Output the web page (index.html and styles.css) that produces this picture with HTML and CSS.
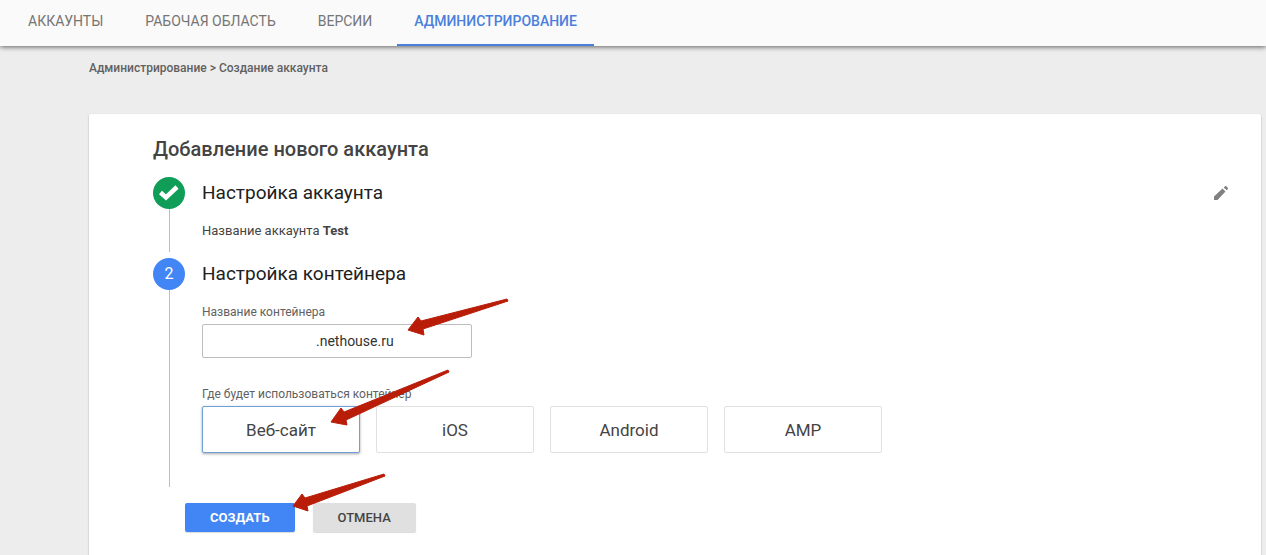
FILE: index.html
```html
<!DOCTYPE html>
<html lang="ru">
<head>
  <meta charset="UTF-8">
  <title>Создание аккаунта</title>
  <link rel="stylesheet" href="styles.css">
</head>
<body>
  <nav class="tabs">
    <a href="#accounts">АККАУНТЫ</a>
    <a href="#workspace">РАБОЧАЯ ОБЛАСТЬ</a>
    <a href="#versions">ВЕРСИИ</a>
    <a href="#admin" class="active">АДМИНИСТРИРОВАНИЕ</a>
  </nav>
  <main class="page">
    <div class="breadcrumbs">Администрирование &gt; Создание аккаунта</div>
    <form class="card">
      <h1>Добавление нового аккаунта</h1>

      <section class="step">
        <div class="marker">
          <span class="circle done">
            <svg width="32" height="32" viewBox="0 0 32 32"><path d="M7.5 15.500l5.500 5L24 10" fill="none" stroke="#fff" stroke-width="4.500"/></svg>
          </span>
        </div>
        <div class="content">
          <div class="step-head">
            <h2>Настройка аккаунта</h2>
            <button type="button" class="edit" aria-label="Изменить">
              <svg width="18" height="18" viewBox="0 0 18 18"><path fill="#808080" d="M2 12.500L10.500 4.500L13.500 7.500L5.500 16H2ZM11.700 3.400L13 2.200Q13.700 1.800 14.300 2.300L15.800 3.800Q16.200 4.500 15.800 5.100L14.700 6.300Z"/></svg>
            </button>
          </div>
          <p class="summary">Название аккаунта <b>Test</b></p>
        </div>
      </section>

      <section class="step">
        <div class="marker"><span class="circle">2</span></div>
        <div class="content container-step">
          <h2>Настройка контейнера</h2>
          <label class="label" for="containerName">Название контейнера</label>
          <div class="field">
            <input type="text" id="containerName" value=".nethouse.ru">
            <svg class="arrow arrow-name" width="104" height="40" viewBox="0 0 104 40"><path d="M1 32L11 19L14 23L100 1L101 3L16 31L17 37Z"/></svg>
          </div>
          <div class="label" id="targetLabel">Где будет использоваться контейнер</div>
          <div class="options" role="group" aria-labelledby="targetLabel">
            <button type="button" class="selected">Веб-сайт</button>
            <button type="button">iOS</button>
            <button type="button">Android</button>
            <button type="button">AMP</button>
            <svg class="arrow arrow-target" width="122" height="60" viewBox="0 0 122 60"><path d="M1 53L11 39L14 43L118 1L119 3L16 51L17 56Z"/></svg>
          </div>
        </div>
      </section>

      <div class="actions">
        <button type="submit" class="primary">СОЗДАТЬ</button>
        <button type="button">ОТМЕНА</button>
        <svg class="arrow arrow-create" width="96" height="40" viewBox="0 0 96 40"><path d="M1 33L10 21L13 25L92 1L93 3L15 33L16 38Z"/></svg>
      </div>
    </form>
  </main>
</body>
</html>
```

FILE: styles.css
```css
* {
  box-sizing: border-box;
}
body {
  margin: 0;
  min-height: 100vh;
  display: flex;
  flex-direction: column;
  background: #ededed;
  color: #444;
  font-family: Roboto, "Liberation Sans", sans-serif;
  font-size: 13px;
}
h1, h2, p {
  margin: 0;
}
button, input {
  font-family: inherit;
}
.tabs {
  display: flex;
  gap: 8px;
  height: 46px;
  padding: 0 11px;
  background: #fafafa;
  box-shadow: 0 1px 5px rgba(0, 0, 0, 0.6);
}
.tabs a {
  padding: 0 17px;
  line-height: 43px;
  border-bottom: 2px solid transparent;
  color: #757575;
  font-size: 14px;
  text-decoration: none;
}
.tabs a.active {
  color: #4a7fdc;
  border-color: #4a7fdc;
  font-weight: 500;
}
.page {
  flex: 1;
  display: flex;
  flex-direction: column;
  padding: 14px 5px 0 89px;
}
.breadcrumbs {
  line-height: 16px;
  font-size: 12px;
  font-weight: 500;
  color: #616161;
}
.card {
  flex: 1;
  margin-top: 38px;
  padding: 23px 31px 23px 64px;
  background: #fff;
  border-radius: 2px 2px 0 0;
  box-shadow: 0 1px 2px rgba(0, 0, 0, 0.3);
}
h1 {
  margin-bottom: 16px;
  font-size: 20px;
  font-weight: 500;
  line-height: 24px;
}
.step {
  display: flex;
  gap: 17px;
}
.step + .step {
  margin-top: 6px;
}
.marker {
  display: flex;
  flex-direction: column;
  align-items: center;
}
.marker::after {
  content: "";
  flex: 1;
  border-left: 1px solid #bdbdbd;
}
.circle {
  width: 32px;
  height: 32px;
  border-radius: 50%;
  background: #4285f4;
  color: #fff;
  font-size: 16px;
  line-height: 32px;
  text-align: center;
}
.circle.done {
  background: #0f9d58;
}
.circle svg {
  display: block;
}
.content {
  flex: 1;
}
.step-head {
  display: flex;
  justify-content: space-between;
  align-items: center;
}
h2 {
  font-size: 19px;
  font-weight: 400;
  line-height: 32px;
  color: #212121;
}
.edit {
  display: flex;
  padding: 0;
  border: none;
  background: none;
  cursor: pointer;
}
.summary {
  padding: 12px 0 11px;
  line-height: 20px;
}
.container-step {
  padding-bottom: 34px;
}
.label {
  display: block;
  margin: 14px 0 4px;
  font-size: 12px;
  line-height: 16px;
  color: #616161;
}
.field, .options, .actions {
  position: relative;
}
.field {
  width: 270px;
  margin-bottom: 28px;
}
.field input {
  display: block;
  width: 100%;
  height: 34px;
  padding: 0 12px 0 113px;
  border: 1px solid #bdbdbd;
  border-radius: 2px;
  background: #fff;
  color: #333;
  font-size: 14px;
}
.options {
  display: flex;
  gap: 16px;
}
.options button {
  width: 158px;
  height: 47px;
  border: 1px solid #e0e0e0;
  border-radius: 2px;
  background: #fff;
  color: #444;
  font-size: 17px;
  cursor: pointer;
}
.options .selected {
  border-color: #6f9fd8;
  box-shadow: 0 1px 3px rgba(0, 0, 0, 0.35);
}
.actions {
  display: flex;
  gap: 18px;
  margin: 16px 0 0 32px;
}
.actions button {
  height: 29px;
  padding: 0 25px;
  border: none;
  border-radius: 2px;
  background: #e0e0e0;
  color: #444;
  font-size: 13px;
  font-weight: 500;
  box-shadow: 0 1px 1px rgba(0, 0, 0, 0.15);
  cursor: pointer;
}
.actions .primary {
  background: #4285f4;
  color: #fff;
  font-weight: 700;
}
/* red pointers drawn over the form */
.arrow {
  position: absolute;
  fill: #b91d08;
  stroke: #b91d08;
  stroke-width: 1px;
  stroke-linejoin: round;
  pointer-events: none;
}
.arrow-name {
  left: 205px;
  top: -26px;
}
.arrow-target {
  left: 128px;
  top: -37px;
}
.arrow-create {
  left: 107px;
  top: -30px;
}
```
